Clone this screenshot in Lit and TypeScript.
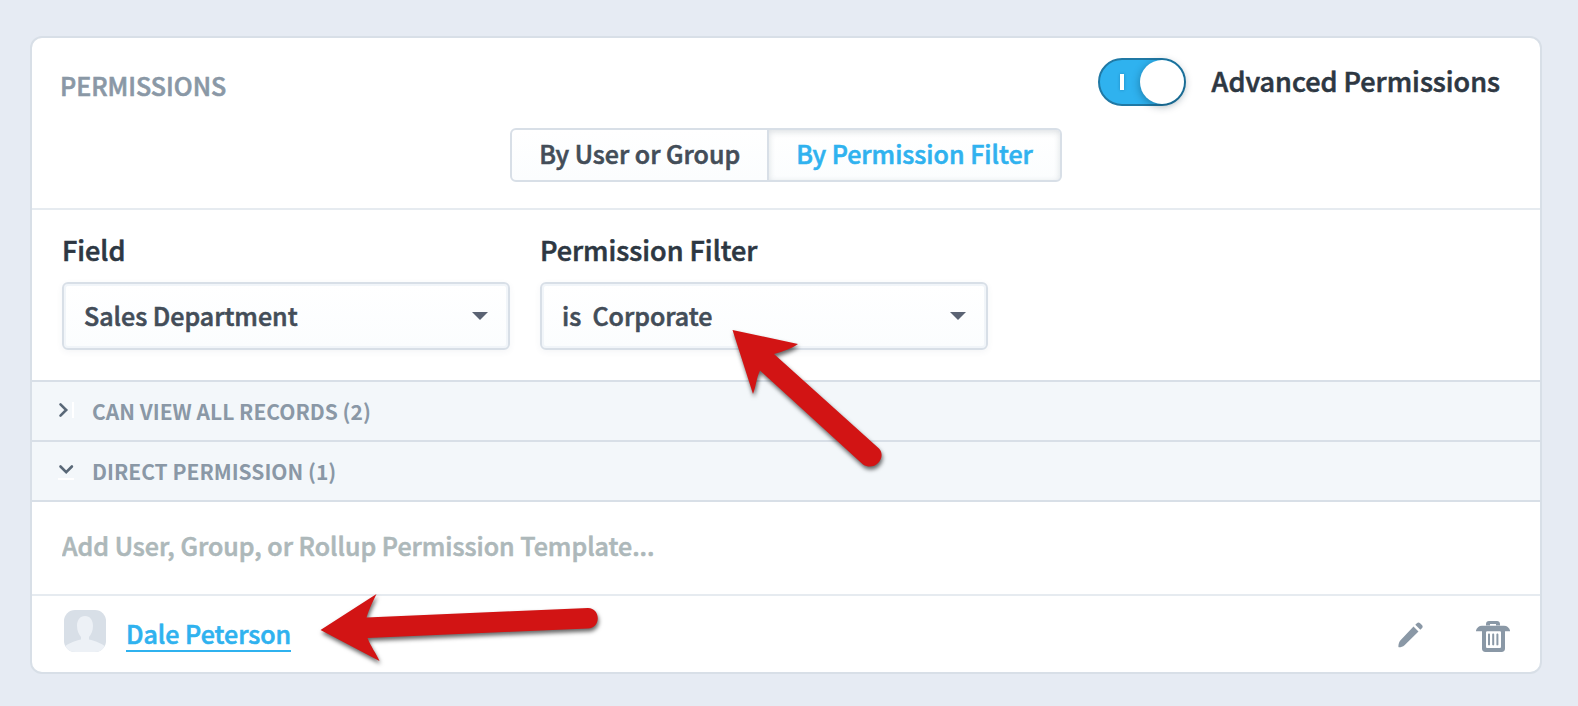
import { LitElement, html, css } from "lit";
import { customElement, property, state } from "lit/decorators.js";
import { classMap } from "lit/directives/class-map.js";

@customElement("permission-section")
class PermissionSection extends LitElement {
  @property() heading = "";
  @property({ type: Boolean }) open = false;

  static styles = css`
    :host { display: block; }
    .bar {
      display: flex;
      align-items: center;
      gap: 16px;
      box-sizing: border-box;
      width: 100%;
      height: 60px;
      padding: 0 26px;
      border: 0;
      border-bottom: 2px solid #d8dfe7;
      background: #f3f7fa;
      color: #8a98a6;
      font: inherit;
      font-size: 21px;
      font-weight: 700;
      line-height: 32px;
      text-align: left;
      cursor: pointer;
      -webkit-text-stroke: 0;
    }
    .chevron { flex: none; width: 18px; height: 20px; }
  `;

  render() {
    return html`
      <button class="bar" aria-expanded=${this.open ? "true" : "false"} @click=${() => (this.open = !this.open)}>
        ${this.open
          ? html`<svg class="chevron" viewBox="0 0 18 20" aria-hidden="true">
              <path d="M2.500 5.500l5.700 5.700 5.700-5.700" fill="none" stroke="#596877" stroke-width="2.600" stroke-linecap="round" />
              <path d="M0 17h16v2H0z" fill="#fff" />
            </svg>`
          : html`<svg class="chevron" viewBox="0 0 18 20" aria-hidden="true">
              <path d="M2.500 3.300l5.700 5.700-5.700 5.700" fill="none" stroke="#596877" stroke-width="2.600" stroke-linecap="round" />
              <path d="M14 1h2v16h-2z" fill="#fff" />
            </svg>`}
        <span>${this.heading}</span>
      </button>
    `;
  }
}

@customElement("app-root")
class AppRoot extends LitElement {
  @state() private tab = "filter";

  static styles = css`
    :host {
      display: block;
      box-sizing: border-box;
      min-height: 100vh;
      padding: 36px 36px 32px 30px;
      background: #e6ebf3;
      font-family: "Noto Sans CJK SC", "Noto Sans", sans-serif;
      font-weight: 500;
      color: #2d3742;
      -webkit-text-stroke: 0.6px currentColor;
    }
    .card {
      position: relative;
      border: 2px solid #d8dfe7;
      border-radius: 12px;
      background: #fff;
    }
    .header {
      padding: 20px 40px 26px 28px;
      border-bottom: 2px solid #e6ebf0;
    }
    .top { display: flex; justify-content: space-between; align-items: center; height: 48px; }
    .title {
      margin: 0;
      padding-top: 6px;
      font-size: 25px;
      line-height: 36px;
      font-weight: inherit;
      color: #8a98a6;
    }
    .advanced { display: flex; align-items: center; gap: 26px; font-size: 27px; line-height: 40px; }
    .advanced-text { padding-bottom: 2px; }
    .switch {
      appearance: none;
      position: relative;
      box-sizing: border-box;
      width: 88px;
      height: 48px;
      margin: 0;
      border: 2px solid #2079a5;
      border-radius: 24px;
      background: #2fb2ef;
      cursor: pointer;
    }
    .switch::before {
      content: "";
      position: absolute;
      left: 20px;
      top: 14px;
      width: 4px;
      height: 16px;
      background: #fff;
      box-shadow: 0 0 3px rgba(0, 60, 100, 0.35);
    }
    .switch::after {
      content: "";
      position: absolute;
      right: 0;
      top: 0;
      width: 44px;
      height: 44px;
      border-radius: 50%;
      background: #fff;
      box-shadow: 0 2px 8px rgba(0, 40, 60, 0.4);
    }
    .tabs { display: flex; justify-content: center; margin-top: 22px; padding-left: 12px; }
    .tab {
      box-sizing: border-box;
      height: 54px;
      padding: 0 27px 4px;
      border: 2px solid #d8dfe7;
      border-radius: 6px 0 0 6px;
      background: linear-gradient(#fff, #fbfdfe);
      color: #434d58;
      font: inherit;
      font-size: 25px;
      line-height: 36px;
      cursor: pointer;
      -webkit-text-stroke: inherit;
    }
    .tab + .tab { margin-left: -2px; border-radius: 0 6px 6px 0; }
    .active { color: #2fb2ef; box-shadow: inset 0 2px 6px rgba(40, 60, 80, 0.16); }
    .fields {
      display: flex;
      gap: 30px;
      padding: 20px 30px 30px;
      border-bottom: 2px solid #d8dfe7;
    }
    .field { flex: 0 1 448px; }
    .label { display: block; margin-bottom: 12px; font-size: 27px; line-height: 40px; }
    .select {
      appearance: none;
      display: block;
      box-sizing: border-box;
      width: 100%;
      height: 68px;
      padding: 0 60px 3px 20px;
      border: 2px solid #d8dfe7;
      border-radius: 6px;
      background:
        url('data:image/svg+xml,<svg xmlns="http://www.w3.org/2000/svg" width="16" height="8"><path d="M0 0h16l-8 8z" fill="%235b6373"/></svg>')
          no-repeat right 20px center,
        linear-gradient(#fff, #fbfdfe);
      box-shadow: inset 0 0 0 2px #f1f5f9, 0 2px 6px rgba(60, 90, 120, 0.06);
      color: #434d58;
      font: inherit;
      font-size: 25px;
      cursor: pointer;
      -webkit-text-stroke: inherit;
    }
    .add { display: block; border-bottom: 2px solid #e6ebf0; }
    .add-input {
      display: block;
      box-sizing: border-box;
      width: 100%;
      height: 92px;
      padding: 0 30px 6px;
      border: 0;
      background: none;
      color: #434d58;
      font: inherit;
      font-size: 25px;
      outline: none;
      -webkit-text-stroke: inherit;
    }
    .add-input::placeholder { color: #adb8ba; opacity: 1; }
    .member { display: flex; align-items: center; height: 76px; padding: 0 30px 0 32px; }
    .avatar { width: 42px; height: 42px; margin: 0 20px 6px 0; }
    .name {
      border-bottom: 2px solid #2fb2ef;
      color: #2fb2ef;
      font-size: 25px;
      line-height: 34px;
      text-decoration: none;
    }
    .actions { display: flex; gap: 52px; margin-left: auto; padding-top: 4px; }
    .action { display: block; height: 34px; padding: 0; border: 0; background: none; color: #8a98a6; cursor: pointer; }
    .icon { display: block; }
    .arrow { position: absolute; overflow: visible; pointer-events: none; filter: drop-shadow(1px 3px 2px rgba(0, 0, 0, 0.6)); }
    .arrow-filter { left: 700px; top: 291px; }
    .arrow-member { left: 288px; top: 555px; }
  `;

  private renderTab(id: string, text: string) {
    return html`<button
      class=${classMap({ tab: true, active: this.tab === id })}
      aria-pressed=${this.tab === id ? "true" : "false"}
      @click=${() => (this.tab = id)}
    >${text}</button>`;
  }

  render() {
    return html`
      <main class="card">
        <header class="header">
          <div class="top">
            <h1 class="title">PERMISSIONS</h1>
            <label class="advanced">
              <input class="switch" type="checkbox" role="switch" checked />
              <span class="advanced-text">Advanced Permissions</span>
            </label>
          </div>
          <div class="tabs">
            ${this.renderTab("user", "By User or Group")}${this.renderTab("filter", "By Permission Filter")}
          </div>
        </header>

        <section class="fields">
          <div class="field">
            <label class="label" for="field">Field</label>
            <select class="select" id="field"><option>Sales Department</option></select>
          </div>
          <div class="field">
            <label class="label" for="filter">Permission Filter</label>
            <select class="select" id="filter"><option>is&nbsp; Corporate</option></select>
          </div>
        </section>

        <permission-section heading="CAN VIEW ALL RECORDS (2)"></permission-section>
        <permission-section heading="DIRECT PERMISSION (1)" open></permission-section>

        <div class="add">
          <input class="add-input" type="text" aria-label="Add permission" placeholder="Add User, Group, or Rollup Permission Template..." />
        </div>

        <div class="member">
          <svg class="avatar" viewBox="0 0 42 42" aria-hidden="true">
            <clipPath id="round"><rect width="42" height="42" rx="11" /></clipPath>
            <g clip-path="url(#round)">
              <rect width="42" height="42" fill="#d8dfe7" />
              <path d="M21 6c-5 0-8 4-8 10 0 5 2 8.500 4 11v2.500c-6 1.500-13 4-17 7.500v5h42v-5c-4-3.500-11-6-17-7.500V27c2-2.500 4-6 4-11 0-6-3-10-8-10z" fill="#edf1f6" />
            </g>
          </svg>
          <a class="name" href="#">Dale Peterson</a>
          <div class="actions">
            <button class="action" aria-label="Edit">
              <svg class="icon" width="26" height="34" viewBox="0 0 26 34" fill="currentColor">
                <path d="M15.500 7.500L20.500 12.500 6.500 26.200C5 27.700 2.800 28.200 1.200 28.200 .5 28.200.4 27.800.4 27.200.5 25.300 1 23.200 2.300 21.500z" />
                <path d="M17.300 5.800l1.600-1.600c1-1 2.200-1 3.200 0l1.800 1.800c1 1 1 2.200 0 3.200l-1.600 1.500z" />
              </svg>
            </button>
            <button class="action" aria-label="Delete">
              <svg class="icon" width="34" height="34" viewBox="0 0 34 34" fill="currentColor">
                <path fill-rule="evenodd" d="M10 6.500V5c0-2 1.200-3 3-3h8c1.800 0 3 1 3 3v1.500zm4 0h6V5h-6z" />
                <path d="M6 6.700h22c3 0 5 2 6 4.500v1H0v-1C1 8.700 3 6.700 6 6.700z" />
                <path fill-rule="evenodd" d="M6 10h23v19.500c0 2.200-1.200 3.500-3.500 3.500h-16C7.200 33 6 31.700 6 29.500zm5.500 2c-1 0-1.500.5-1.500 1.500v14c0 1 .5 1.500 1.500 1.500h12c1 0 1.500-.5 1.500-1.500v-14c0-1-.5-1.500-1.500-1.500z" />
                <path d="M12 15.500c0-1.200 2-1.200 2 0v10c0 1.200-2 1.200-2 0zM16.200 15.500c0-1.200 2-1.200 2 0v10c0 1.200-2 1.200-2 0zM20.400 15.500c0-1.200 2-1.200 2 0v10c0 1.200-2 1.200-2 0z" />
              </svg>
            </button>
          </div>
        </div>

        <svg class="arrow arrow-filter" width="150" height="138" viewBox="0 0 150 138" aria-hidden="true">
          <path d="M.5 1L66 15C59 20 52 22 42 25L147 119.500C155 128 143 143 131 135.500L28 41.500C24 50 24 58 21 65z" fill="#d21414" />
        </svg>
        <svg class="arrow arrow-member" width="280" height="70" viewBox="0 0 280 70" aria-hidden="true">
          <path d="M.5 37L56.500 1C53 8 49 16 46.500 24.500L268 15C281 15 281 35.500 268 35.500L47.500 45C51 54 56 60 59.500 68z" fill="#d21414" />
        </svg>
      </main>
    `;
  }
}
